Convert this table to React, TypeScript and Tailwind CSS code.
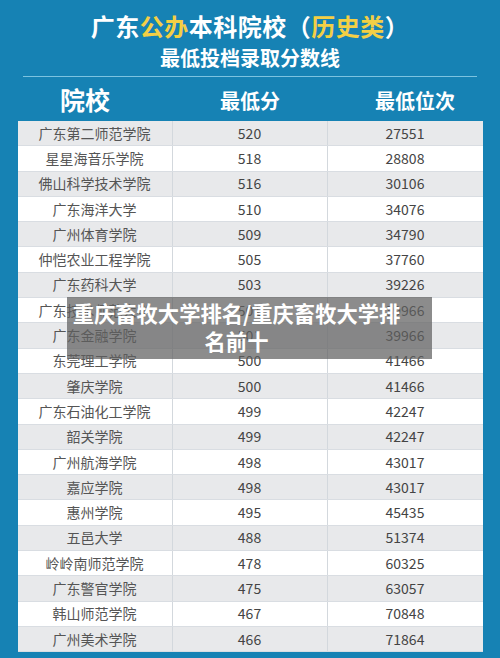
import React from "react";

type Row = {
  name: string;
  score: number;
  rank: number;
};

const rows: Row[] = [
  { name: "广东第二师范学院", score: 520, rank: 27551 },
  { name: "星星海音乐学院", score: 518, rank: 28808 },
  { name: "佛山科学技术学院", score: 516, rank: 30106 },
  { name: "广东海洋大学", score: 510, rank: 34076 },
  { name: "广州体育学院", score: 509, rank: 34790 },
  { name: "仲恺农业工程学院", score: 505, rank: 37760 },
  { name: "广东药科大学", score: 503, rank: 39226 },
  { name: "广东技术师范大学", score: 501, rank: 39966 },
  { name: "广东金融学院", score: 501, rank: 39966 },
  { name: "东莞理工学院", score: 500, rank: 41466 },
  { name: "肇庆学院", score: 500, rank: 41466 },
  { name: "广东石油化工学院", score: 499, rank: 42247 },
  { name: "韶关学院", score: 499, rank: 42247 },
  { name: "广州航海学院", score: 498, rank: 43017 },
  { name: "嘉应学院", score: 498, rank: 43017 },
  { name: "惠州学院", score: 495, rank: 45435 },
  { name: "五邑大学", score: 488, rank: 51374 },
  { name: "岭岭南师范学院", score: 478, rank: 60325 },
  { name: "广东警官学院", score: 475, rank: 63057 },
  { name: "韩山师范学院", score: 467, rank: 70848 },
  { name: "广州美术学院", score: 466, rank: 71864 },
];

export default function App() {
  return (
    <div
      className="relative w-[500px] h-[658px] overflow-hidden bg-[#1682b4] flex flex-col items-center"
      style={{ fontFamily: '"Noto Sans CJK SC", "Noto Sans", sans-serif' }}
    >
      {/* Title */}
      <h1 className="mt-[10px] h-[32px] leading-[32px] text-[24px] font-bold text-white tracking-[0.5px]">
        广东<span className="text-[#f3cf45]">公办</span>本科院校（
        <span className="text-[#f3cf45]">历史类</span>）
      </h1>
      <h2 className="h-[32px] leading-[32px] text-[20px] font-bold text-white">
        最低投档录取分数线
      </h2>

      <div className="mt-[2px] w-[454px] h-px bg-[#7cc3e0]" />

      {/* Header */}
      <div className="w-[465px] h-[44px] grid grid-cols-3 items-center text-white font-bold">
        <div className="text-center text-[25px] pr-[20px] pt-[2px]">院校</div>
        <div className="text-center text-[20px] pt-[4px]">最低分</div>
        <div className="text-center text-[20px] pl-[20px] pt-[4px]">最低位次</div>
      </div>

      {/* Table */}
      <div className="w-[465px] flex flex-col">
        {rows.map((r, i) => (
          <div
            key={i}
            className={
              "grid grid-cols-3 h-[25.3px] items-center text-[14px] border-b border-[#d9dde2] " +
              (i % 2 === 0 ? "bg-[#e8e9eb]" : "bg-white")
            }
          >
            <div className="text-center text-[#555] border-r border-[#d3d8dd] h-full flex items-center justify-center">
              {r.name}
            </div>
            <div className="text-center text-[#444] border-r border-[#d3d8dd] h-full flex items-center justify-center">
              {r.score}
            </div>
            <div className="text-center text-[#444] h-full flex items-center justify-center">
              {r.rank}
            </div>
          </div>
        ))}
      </div>

      {/* Overlay caption */}
      <div className="absolute left-[67px] top-[297px] w-[365px] h-[62px] bg-[rgba(95,95,95,0.72)] pl-[4px] pr-[30px] pt-[2px] text-center text-white font-bold text-[21.3px] leading-[28px]">
        重庆畜牧大学排名/重庆畜牧大学排名前十
      </div>
    </div>
  );
}
